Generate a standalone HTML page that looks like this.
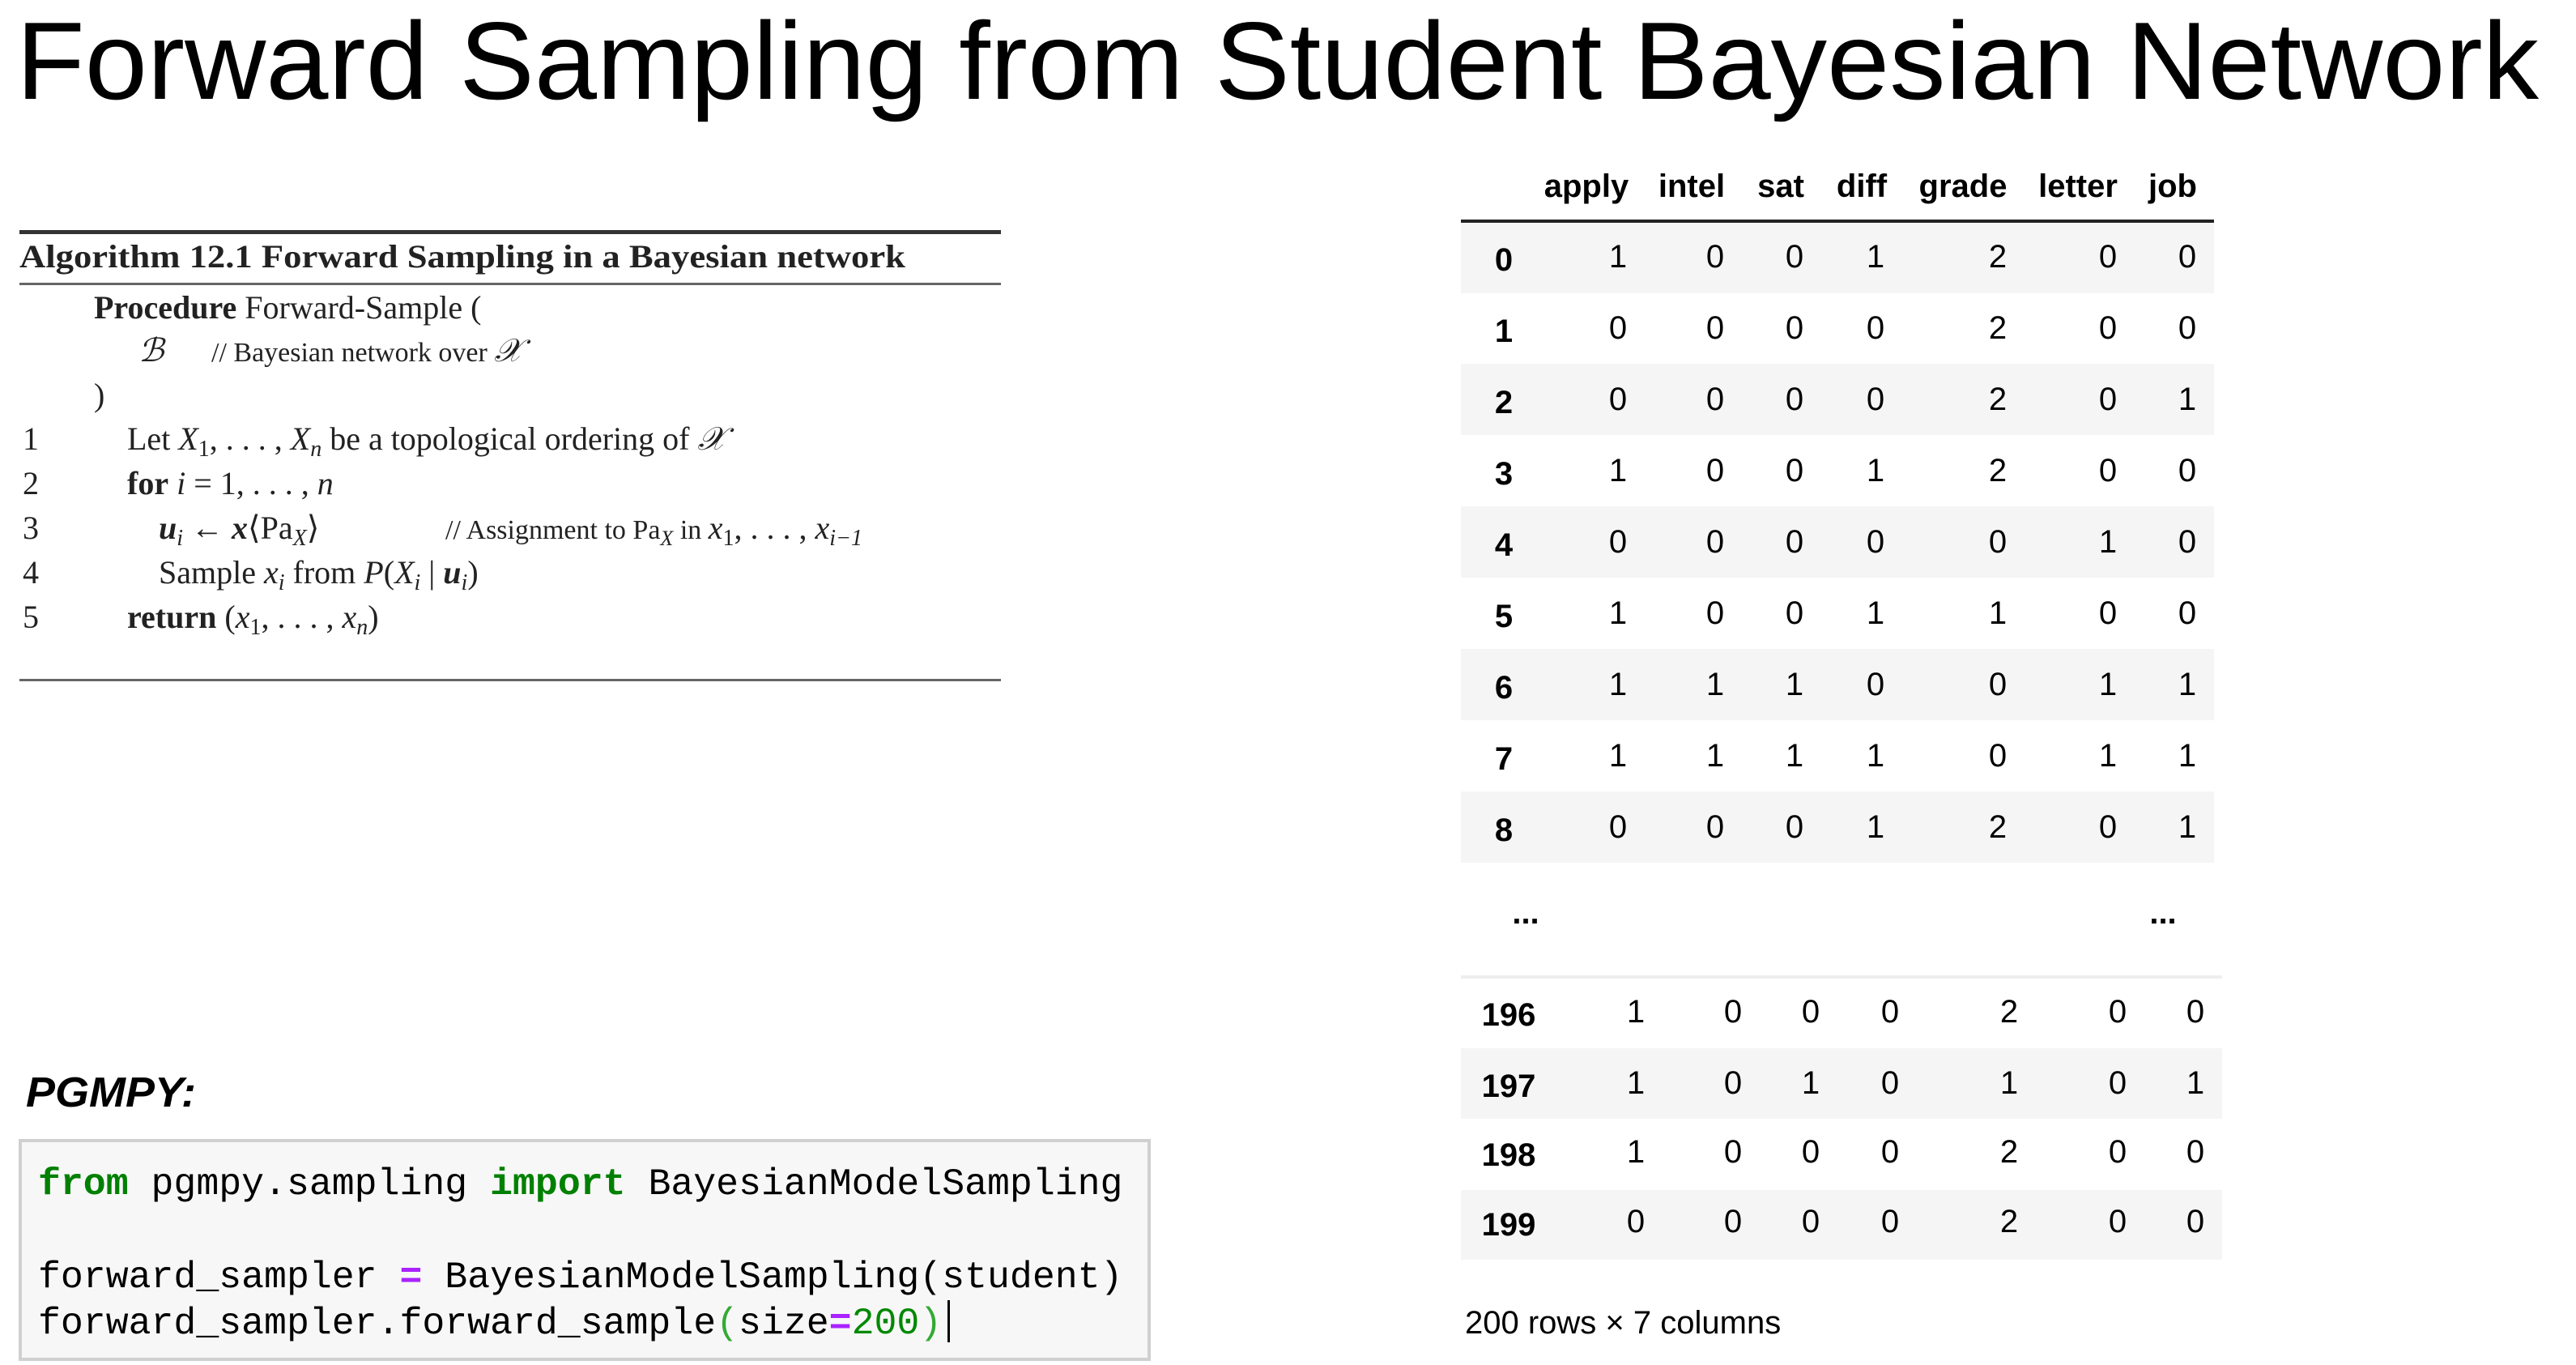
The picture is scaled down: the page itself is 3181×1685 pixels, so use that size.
<!DOCTYPE html>
<html><head><meta charset="utf-8"><style>
html,body{margin:0;padding:0;background:#fff;}
svg{display:block}
.t{font-family:"Liberation Sans",Arial,sans-serif;font-size:40px;fill:#000}
.b{font-weight:bold}
.s{font-family:"Liberation Serif","DejaVu Serif",serif;font-size:40px;fill:#222}
.m{font-family:"Liberation Mono",monospace;font-size:46.5px;fill:#000}
</style></head><body>
<svg width="3181" height="1685" viewBox="0 0 3181 1685" xmlns="http://www.w3.org/2000/svg">
<rect width="3181" height="1685" fill="#fff"/>
<text x="20" y="122" font-family="Liberation Sans, sans-serif" font-size="136" textLength="3115" lengthAdjust="spacingAndGlyphs" fill="#000">Forward Sampling from Student Bayesian Network</text>

<!-- Algorithm -->
<rect x="24" y="284" width="1212" height="5" fill="#333"/>
<rect x="24" y="349" width="1212" height="3" fill="#666"/>
<rect x="24" y="838" width="1212" height="3" fill="#666"/>
<text x="24" y="330" class="s" font-weight="bold" textLength="1094" lengthAdjust="spacingAndGlyphs">Algorithm 12.1 Forward Sampling in a Bayesian network</text>
<text x="116" y="393" class="s"><tspan font-weight="bold">Procedure</tspan> Forward-Sample (</text>
<text x="171" y="446" class="s"><tspan font-style="italic">ℬ</tspan><tspan x="261" font-size="34">// Bayesian network over </tspan><tspan font-style="italic">𝒳</tspan></text>
<text x="116" y="501" class="s">)</text>
<text x="28" y="555" class="s">1</text>
<text x="157" y="555" class="s">Let <tspan font-style="italic">X</tspan><tspan font-size="28" dy="8">1</tspan><tspan dy="-8">, . . . , </tspan><tspan font-style="italic">X</tspan><tspan font-size="28" font-style="italic" dy="8">n</tspan><tspan dy="-8"> be a topological ordering of </tspan><tspan font-style="italic">𝒳</tspan></text>
<text x="28" y="610" class="s">2</text>
<text x="157" y="610" class="s"><tspan font-weight="bold">for</tspan> <tspan font-style="italic">i</tspan> = 1, . . . , <tspan font-style="italic">n</tspan></text>
<text x="28" y="665" class="s">3</text>
<text x="196" y="665" class="s"><tspan font-weight="bold" font-style="italic">u</tspan><tspan font-size="28" font-style="italic" dy="8">i</tspan><tspan dy="-8"> ← </tspan><tspan font-weight="bold" font-style="italic">x</tspan>⟨Pa<tspan font-size="28" font-style="italic" dy="8">X</tspan><tspan dy="-8">⟩</tspan><tspan x="550" font-size="34">// Assignment to Pa</tspan><tspan font-size="26" font-style="italic" dy="8">X</tspan><tspan dy="-8" font-size="34"> in </tspan><tspan font-style="italic">x</tspan><tspan font-size="28" dy="8">1</tspan><tspan dy="-8">, . . . , </tspan><tspan font-style="italic">x</tspan><tspan font-size="28" font-style="italic" dy="8">i−1</tspan></text>
<text x="28" y="720" class="s">4</text>
<text x="196" y="720" class="s">Sample <tspan font-style="italic">x</tspan><tspan font-size="28" font-style="italic" dy="8">i</tspan><tspan dy="-8"> from </tspan><tspan font-style="italic">P</tspan>(<tspan font-style="italic">X</tspan><tspan font-size="28" font-style="italic" dy="8">i</tspan><tspan dy="-8"> | </tspan><tspan font-weight="bold" font-style="italic">u</tspan><tspan font-size="28" font-style="italic" dy="8">i</tspan><tspan dy="-8">)</tspan></text>
<text x="28" y="775" class="s">5</text>
<text x="157" y="775" class="s"><tspan font-weight="bold">return</tspan> (<tspan font-style="italic">x</tspan><tspan font-size="28" dy="8">1</tspan><tspan dy="-8">, . . . , </tspan><tspan font-style="italic">x</tspan><tspan font-size="28" font-style="italic" dy="8">n</tspan><tspan dy="-8">)</tspan></text>

<!-- PGMPY -->
<text x="32" y="1366" font-family="Liberation Sans, sans-serif" font-size="52" font-weight="bold" font-style="italic" textLength="210" lengthAdjust="spacingAndGlyphs">PGMPY:</text>
<rect x="25" y="1408" width="1394" height="270" fill="#f7f7f7" stroke="#d0d0d0" stroke-width="4"/>
<text x="47" y="1474" class="m"><tspan fill="#008000" font-weight="bold">from</tspan> pgmpy.sampling <tspan fill="#008000" font-weight="bold">import</tspan> BayesianModelSampling</text>
<text x="47" y="1589" class="m">forward_sampler <tspan fill="#aa22ff" font-weight="bold">=</tspan> BayesianModelSampling(student)</text>
<text x="47" y="1646" class="m">forward_sampler.forward_sample<tspan fill="#3a3">(</tspan>size<tspan fill="#aa22ff" font-weight="bold">=</tspan><tspan fill="#080">200</tspan><tspan fill="#3a3">)</tspan></text>
<rect x="1170" y="1605" width="3" height="52" fill="#000"/>

<g transform="translate(-9,0)">
<!-- Table top -->
<g class="t b" text-anchor="middle">
<text x="1968" y="243">apply</text><text x="2098" y="243">intel</text><text x="2208" y="243">sat</text><text x="2308" y="243">diff</text><text x="2433" y="243">grade</text><text x="2575" y="243">letter</text><text x="2692" y="243">job</text>
</g>
<rect x="1813" y="271" width="930" height="4" fill="#222"/>
<g fill="#f5f5f5">
<rect x="1813" y="275" width="930" height="87"/>
<rect x="1813" y="449" width="930" height="88"/>
<rect x="1813" y="625" width="930" height="88"/>
<rect x="1813" y="801" width="930" height="88"/>
<rect x="1813" y="977" width="930" height="88"/>
</g>
<g class="t" text-anchor="middle">
<text y="330"><tspan x="1866" font-weight="bold" dy="4">0</tspan><tspan x="2007" dy="-4">1</tspan><tspan x="2127">0</tspan><tspan x="2225">0</tspan><tspan x="2325">1</tspan><tspan x="2476">2</tspan><tspan x="2612">0</tspan><tspan x="2710">0</tspan></text>
<text y="418"><tspan x="1866" font-weight="bold" dy="4">1</tspan><tspan x="2007" dy="-4">0</tspan><tspan x="2127">0</tspan><tspan x="2225">0</tspan><tspan x="2325">0</tspan><tspan x="2476">2</tspan><tspan x="2612">0</tspan><tspan x="2710">0</tspan></text>
<text y="506"><tspan x="1866" font-weight="bold" dy="4">2</tspan><tspan x="2007" dy="-4">0</tspan><tspan x="2127">0</tspan><tspan x="2225">0</tspan><tspan x="2325">0</tspan><tspan x="2476">2</tspan><tspan x="2612">0</tspan><tspan x="2710">1</tspan></text>
<text y="594"><tspan x="1866" font-weight="bold" dy="4">3</tspan><tspan x="2007" dy="-4">1</tspan><tspan x="2127">0</tspan><tspan x="2225">0</tspan><tspan x="2325">1</tspan><tspan x="2476">2</tspan><tspan x="2612">0</tspan><tspan x="2710">0</tspan></text>
<text y="682"><tspan x="1866" font-weight="bold" dy="4">4</tspan><tspan x="2007" dy="-4">0</tspan><tspan x="2127">0</tspan><tspan x="2225">0</tspan><tspan x="2325">0</tspan><tspan x="2476">0</tspan><tspan x="2612">1</tspan><tspan x="2710">0</tspan></text>
<text y="770"><tspan x="1866" font-weight="bold" dy="4">5</tspan><tspan x="2007" dy="-4">1</tspan><tspan x="2127">0</tspan><tspan x="2225">0</tspan><tspan x="2325">1</tspan><tspan x="2476">1</tspan><tspan x="2612">0</tspan><tspan x="2710">0</tspan></text>
<text y="858"><tspan x="1866" font-weight="bold" dy="4">6</tspan><tspan x="2007" dy="-4">1</tspan><tspan x="2127">1</tspan><tspan x="2225">1</tspan><tspan x="2325">0</tspan><tspan x="2476">0</tspan><tspan x="2612">1</tspan><tspan x="2710">1</tspan></text>
<text y="946"><tspan x="1866" font-weight="bold" dy="4">7</tspan><tspan x="2007" dy="-4">1</tspan><tspan x="2127">1</tspan><tspan x="2225">1</tspan><tspan x="2325">1</tspan><tspan x="2476">0</tspan><tspan x="2612">1</tspan><tspan x="2710">1</tspan></text>
<text y="1034"><tspan x="1866" font-weight="bold" dy="4">8</tspan><tspan x="2007" dy="-4">0</tspan><tspan x="2127">0</tspan><tspan x="2225">0</tspan><tspan x="2325">1</tspan><tspan x="2476">2</tspan><tspan x="2612">0</tspan><tspan x="2710">1</tspan></text>
</g>
<text x="1893" y="1140" class="t b" text-anchor="middle">...</text>
<text x="2680" y="1140" class="t b" text-anchor="middle">...</text>

<!-- Table bottom -->
<rect x="1813" y="1204" width="940" height="4" fill="#eee"/>
<g fill="#f5f5f5">
<rect x="1813" y="1294" width="940" height="87"/>
<rect x="1813" y="1469" width="940" height="86"/>
</g>
<g class="t" text-anchor="middle">
<text y="1262"><tspan x="1872" font-weight="bold" dy="4">196</tspan><tspan x="2029" dy="-4">1</tspan><tspan x="2149">0</tspan><tspan x="2245">0</tspan><tspan x="2343">0</tspan><tspan x="2490">2</tspan><tspan x="2624">0</tspan><tspan x="2720">0</tspan></text>
<text y="1350"><tspan x="1872" font-weight="bold" dy="4">197</tspan><tspan x="2029" dy="-4">1</tspan><tspan x="2149">0</tspan><tspan x="2245">1</tspan><tspan x="2343">0</tspan><tspan x="2490">1</tspan><tspan x="2624">0</tspan><tspan x="2720">1</tspan></text>
<text y="1435"><tspan x="1872" font-weight="bold" dy="4">198</tspan><tspan x="2029" dy="-4">1</tspan><tspan x="2149">0</tspan><tspan x="2245">0</tspan><tspan x="2343">0</tspan><tspan x="2490">2</tspan><tspan x="2624">0</tspan><tspan x="2720">0</tspan></text>
<text y="1521"><tspan x="1872" font-weight="bold" dy="4">199</tspan><tspan x="2029" dy="-4">0</tspan><tspan x="2149">0</tspan><tspan x="2245">0</tspan><tspan x="2343">0</tspan><tspan x="2490">2</tspan><tspan x="2624">0</tspan><tspan x="2720">0</tspan></text>
</g>
<text x="1818" y="1646" class="t" font-size="42">200 rows × 7 columns</text>
</g>
</svg>
</body></html>
